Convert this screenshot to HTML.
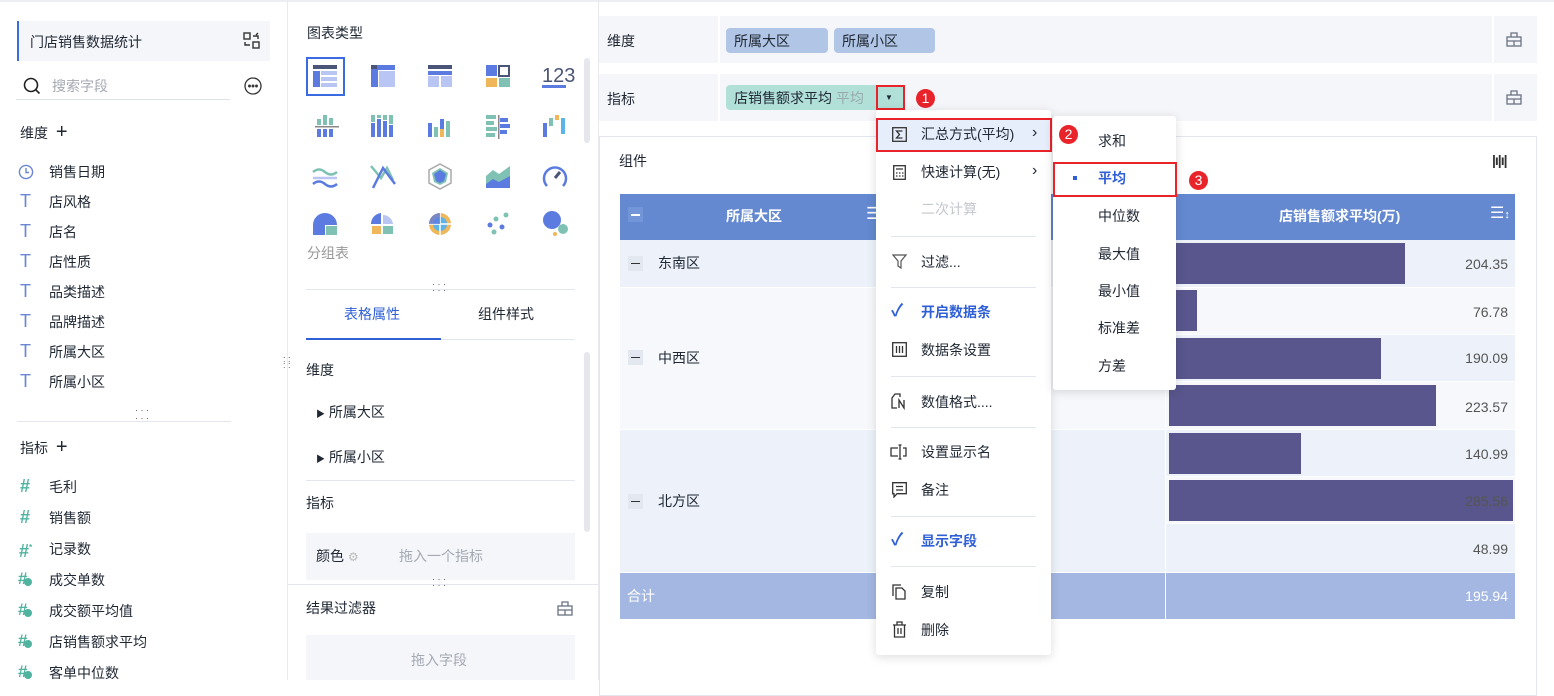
<!DOCTYPE html>
<html><head><meta charset="utf-8"><style>
*{margin:0;padding:0;box-sizing:border-box}
body{width:1554px;height:680px;overflow:hidden;background:#fff;font-family:"Liberation Sans","Noto Sans CJK SC",sans-serif;font-size:14px;color:#1f2733;position:relative}
.a{position:absolute}
.t{position:absolute;white-space:nowrap;line-height:20px}
.ic{position:absolute}
.fi{color:#6c86d6;font-size:18px}
.sep{position:absolute;height:1px;background:#e3e6ee}
</style></head><body>
<div class="a" style="left:0;top:0;width:1554px;height:2px;background:#eceef3"></div>
<!-- LEFT -->
<div class="a" style="left:287px;top:0;width:1px;height:680px;background:#e8eaf0"></div>
<div class="a" style="left:17px;top:21px;width:253px;height:40px;background:#f5f6fa;border-left:2px solid #3b6be0"></div>
<div class="t" style="left:30px;top:32px">门店销售数据统计</div>
<svg class="ic" style="left:243px;top:32px" width="17" height="17" viewBox="0 0 17 17" fill="none" stroke="#333" stroke-width="1.4"><rect x="1" y="1" width="6" height="6"/><rect x="10" y="10" width="6" height="6"/><path d="M10 4h5v3M13 3l2-2M7 13H2v-3"/></svg>
<svg class="ic" style="left:23px;top:77px" width="18" height="18" viewBox="0 0 18 18" fill="none" stroke="#222" stroke-width="1.6"><circle cx="8" cy="8" r="6.5"/><path d="M12.5 12.5l4 4"/></svg>
<div class="t" style="left:52px;top:76px;color:#a4a9b3">搜索字段</div>
<div class="a" style="left:16px;top:99px;width:214px;height:1px;background:#dfe2e8"></div>
<svg class="ic" style="left:244px;top:77px" width="18" height="18" viewBox="0 0 18 18" fill="none" stroke="#333" stroke-width="1.3"><circle cx="9" cy="9" r="8"/><circle cx="5.5" cy="9" r=".8" fill="#333"/><circle cx="9" cy="9" r=".8" fill="#333"/><circle cx="12.5" cy="9" r=".8" fill="#333"/></svg>
<div class="t" style="left:20px;top:122px">维度 <span style="font-size:20px;margin-left:4px">+</span></div>
<svg class="ic" style="left:18px;top:164px" width="16" height="16" viewBox="0 0 16 16" fill="none" stroke="#6c86d6" stroke-width="1.4"><circle cx="8" cy="8" r="6.6"/><path d="M8 4v4.5h3"/></svg>
<div class="t" style="left:49px;top:162px">销售日期</div>
<div class="t fi" style="left:20px;top:191px">T</div><div class="t" style="left:49px;top:192px">店风格</div>
<div class="t fi" style="left:20px;top:221px">T</div><div class="t" style="left:49px;top:222px">店名</div>
<div class="t fi" style="left:20px;top:251px">T</div><div class="t" style="left:49px;top:252px">店性质</div>
<div class="t fi" style="left:20px;top:281px">T</div><div class="t" style="left:49px;top:282px">品类描述</div>
<div class="t fi" style="left:20px;top:311px">T</div><div class="t" style="left:49px;top:312px">品牌描述</div>
<div class="t fi" style="left:20px;top:341px">T</div><div class="t" style="left:49px;top:342px">所属大区</div>
<div class="t fi" style="left:20px;top:371px">T</div><div class="t" style="left:49px;top:372px">所属小区</div>
<div class="a" style="left:17px;top:421px;width:214px;height:1px;background:#e3e6ee"></div>
<div class="t" style="left:135px;top:406px;font-size:9px;line-height:8px;color:#555">· · ·<br>· · ·</div>
<div class="t" style="left:20px;top:437px">指标 <span style="font-size:20px;margin-left:4px">+</span></div>
<div class="t" style="left:20px;top:476px;color:#4fb3a0;font-size:18px;font-weight:bold">#</div><div class="t" style="left:49px;top:477px">毛利</div>
<div class="t" style="left:20px;top:507px;color:#4fb3a0;font-size:18px;font-weight:bold">#</div><div class="t" style="left:49px;top:508px">销售额</div>
<div class="t" style="left:19px;top:538px;color:#4fb3a0;font-size:18px;font-weight:bold">#<sup style="font-size:8px">*</sup></div><div class="t" style="left:49px;top:539px">记录数</div>
<div class="t" style="left:18px;top:569px;color:#4fb3a0;font-size:17px;font-weight:bold">#<span style="display:inline-block;width:8px;height:8px;border-radius:50%;background:#4fb3a0;vertical-align:-2px;margin-left:-3px"></span></div><div class="t" style="left:49px;top:570px">成交单数</div>
<div class="t" style="left:18px;top:600px;color:#4fb3a0;font-size:17px;font-weight:bold">#<span style="display:inline-block;width:8px;height:8px;border-radius:50%;background:#4fb3a0;vertical-align:-2px;margin-left:-3px"></span></div><div class="t" style="left:49px;top:601px">成交额平均值</div>
<div class="t" style="left:18px;top:631px;color:#4fb3a0;font-size:17px;font-weight:bold">#<span style="display:inline-block;width:8px;height:8px;border-radius:50%;background:#4fb3a0;vertical-align:-2px;margin-left:-3px"></span></div><div class="t" style="left:49px;top:632px">店销售额求平均</div>
<div class="t" style="left:18px;top:662px;color:#4fb3a0;font-size:17px;font-weight:bold">#<span style="display:inline-block;width:8px;height:8px;border-radius:50%;background:#4fb3a0;vertical-align:-2px;margin-left:-3px"></span></div><div class="t" style="left:49px;top:663px">客单中位数</div>
<div class="t" style="left:283px;top:356px;font-size:9px;line-height:6px;color:#555">: :<br>: :</div>

<!-- MIDDLE -->
<div class="a" style="left:598px;top:0;width:1px;height:680px;background:#e8eaf0"></div>
<div class="t" style="left:307px;top:23px">图表类型</div>
<div class="a" style="left:306px;top:57px;width:39px;height:39px;border:2px solid #3b6be0"></div>
<svg class="ic" style="left:300px;top:60px" width="280" height="190" viewBox="0 0 280 190">
<g transform="translate(13,5)"><rect width="24" height="4" fill="#4a5577"/><rect y="6" width="7" height="16" fill="#5b7be0"/><rect x="8" y="6" width="16" height="4" fill="#b9c6f3"/><rect x="8" y="12" width="16" height="4" fill="#b9c6f3"/><rect x="8" y="18" width="16" height="4" fill="#b9c6f3"/></g>
<g transform="translate(71,5)"><rect width="7" height="22" fill="#5b7be0"/><rect x="7" width="17" height="5" fill="#5b7be0"/><rect x="8" y="6" width="16" height="16" fill="#b9c6f3"/><rect width="6" height="4" fill="#4a5577"/></g>
<g transform="translate(128,5)"><rect width="24" height="4" fill="#4a5577"/><rect y="6" width="24" height="4" fill="#5b7be0"/><rect y="11" width="11" height="11" fill="#b9c6f3"/><rect x="13" y="11" width="11" height="11" fill="#b9c6f3"/></g>
<g transform="translate(186,5)"><rect width="11" height="11" fill="#5b7be0"/><rect x="13" y="1" width="10" height="10" fill="none" stroke="#4a5577" stroke-width="2"/><rect y="13" width="11" height="9" fill="#f0b75a"/><rect x="13" y="13" width="11" height="9" fill="#7fc2b4"/></g>
<text x="242" y="22" font-family="Liberation Sans" font-size="20" fill="#4a5577">123</text><rect x="242" y="25" width="24" height="3" fill="#5b7be0"/>
<g transform="translate(15,55)"><rect x="8" y="0" width="4" height="10" fill="#7fc2b4"/><rect x="2" y="4" width="4" height="6" fill="#7fc2b4"/><rect x="14" y="3" width="4" height="7" fill="#7fc2b4"/><rect x="0" y="11" width="24" height="1.5" fill="#888"/><rect x="2" y="14" width="4" height="8" fill="#5b7be0"/><rect x="8" y="14" width="4" height="8" fill="#5b7be0"/><rect x="14" y="14" width="4" height="8" fill="#5b7be0"/></g>
<g transform="translate(71,55)"><rect x="0" y="8" width="4" height="14" fill="#5b7be0"/><rect x="0" y="0" width="4" height="7" fill="#7fc2b4"/><rect x="6" y="4" width="4" height="18" fill="#5b7be0"/><rect x="6" y="0" width="4" height="3" fill="#7fc2b4"/><rect x="12" y="6" width="4" height="16" fill="#5b7be0"/><rect x="12" y="0" width="4" height="5" fill="#7fc2b4"/><rect x="18" y="10" width="4" height="12" fill="#5b7be0"/><rect x="18" y="0" width="4" height="9" fill="#7fc2b4"/></g>
<g transform="translate(128,55)"><rect x="0" y="8" width="4" height="14" fill="#5b7be0"/><rect x="6" y="12" width="4" height="10" fill="#7fc2b4"/><rect x="12" y="4" width="4" height="18" fill="#5b7be0"/><rect x="12" y="14" width="4" height="8" fill="#f0b75a"/><rect x="18" y="6" width="4" height="16" fill="#7fc2b4"/></g>
<g transform="translate(186,55)"><rect x="0" y="0" width="10" height="4" fill="#7fc2b4"/><rect x="0" y="6" width="8" height="4" fill="#7fc2b4"/><rect x="0" y="12" width="11" height="4" fill="#7fc2b4"/><rect x="0" y="18" width="9" height="4" fill="#7fc2b4"/><rect x="12" y="0" width="1.5" height="24" fill="#888"/><rect x="14" y="3" width="8" height="4" fill="#5b7be0"/><rect x="14" y="9" width="10" height="4" fill="#5b7be0"/><rect x="14" y="15" width="7" height="4" fill="#5b7be0"/></g>
<g transform="translate(243,55)"><rect x="0" y="8" width="4" height="14" fill="#5b7be0"/><rect x="6" y="3" width="4" height="8" fill="#7fc2b4"/><rect x="12" y="0" width="4" height="5" fill="#f0b75a"/><rect x="18" y="3" width="4" height="16" fill="#5bb3e8"/></g>
<g transform="translate(13,106)" fill="none" stroke-width="2.5"><path d="M0 6q6-5 12 0t12 0" stroke="#7fc2b4"/><path d="M0 12h24" stroke="#b9c6f3"/><path d="M0 18q6-5 12 0t12 0" stroke="#5b7be0"/></g>
<g transform="translate(71,104)" fill="none" stroke-width="2.5"><path d="M0 2l10 12 6-10 6 12" stroke="#7fc2b4"/><path d="M2 24 12 4l12 16" stroke="#5b7be0"/></g>
<g transform="translate(129,104)"><path d="M11 0l11 6v13l-11 6-11-6V6z" fill="none" stroke="#aaa" stroke-width="1.5"/><path d="M11 4l8 5-2 9-6 3-6-3-2-9z" fill="#7fc2b4"/><path d="M11 6l6 4-2 7-4 2-4-2-2-7z" fill="#5b7be0"/></g>
<g transform="translate(186,106)"><path d="M0 10l7-6 6 4 11-8v22H0z" fill="#7fc2b4"/><path d="M0 18l7-5 6 3 11-6v12H0z" fill="#5b7be0"/></g>
<g transform="translate(243,104)" fill="none"><path d="M4 22A11 11 0 1 1 20 22" stroke="#5b7be0" stroke-width="2.5"/><path d="M12 14l5-6" stroke="#4a5577" stroke-width="3"/></g>
<g transform="translate(13,153)"><path d="M12 0A12 12 0 0 0 0 12v10h12V12h12A12 12 0 0 0 12 0z" fill="#5b7be0"/><rect x="13" y="13" width="11" height="9" fill="#7fc2b4"/></g>
<g transform="translate(71,153)"><path d="M10 0A11 11 0 0 0 0 11h10z" fill="#5b7be0"/><path d="M12 2a10 10 0 0 1 10 9H12z" fill="#b9c6f3"/><rect x="1" y="13" width="9" height="8" fill="#f0b75a"/><rect x="12" y="13" width="10" height="8" fill="#7fc2b4"/></g>
<g transform="translate(129,153)"><circle cx="11" cy="11" r="11" fill="#f0b75a"/><circle cx="11" cy="11" r="7" fill="#5bb3e8"/><path d="M11 0v22M0 11h22" stroke="#fff" stroke-width="1.5"/><path d="M0 11a11 11 0 0 1 11-11v11z" fill="#5b7be0" opacity=".8"/></g>
<g transform="translate(186,153)" fill="#7fc2b4"><circle cx="20" cy="2" r="2.5"/><circle cx="10" cy="6" r="2.5"/><circle cx="4" cy="12" r="2.5" fill="#5b7be0"/><circle cx="16" cy="14" r="2.5" fill="#5b7be0"/><circle cx="8" cy="19" r="2.5"/></g>
<g transform="translate(243,151)"><circle cx="9" cy="9" r="9" fill="#5b7be0"/><circle cx="20" cy="18" r="5" fill="#7fc2b4"/><circle cx="12" cy="23" r="2" fill="#f0b75a"/></g>
</svg>
<div class="a" style="left:584px;top:58px;width:6px;height:85px;border-radius:3px;background:#e5e7ec"></div>
<div class="t" style="left:307px;top:243px;color:#999">分组表</div>
<div class="t" style="left:432px;top:281px;font-size:9px;line-height:6px;color:#555">· · ·<br>· · ·</div>
<div class="a" style="left:306px;top:289px;width:269px;height:1px;background:#e3e6ee"></div>
<div class="t" style="left:344px;top:304px;color:#2f5fd6">表格属性</div>
<div class="t" style="left:478px;top:304px">组件样式</div>
<div class="a" style="left:306px;top:339px;width:269px;height:1px;background:#e3e6ee"></div>
<div class="a" style="left:306px;top:338px;width:135px;height:2px;background:#2f5fd6"></div>
<div class="a" style="left:584px;top:352px;width:6px;height:180px;border-radius:3px;background:#e5e7ec"></div>
<div class="t" style="left:306px;top:360px">维度</div>
<div class="t" style="left:316px;top:402px"><span style="font-size:9px">▶</span> 所属大区</div>
<div class="t" style="left:316px;top:447px"><span style="font-size:9px">▶</span> 所属小区</div>
<div class="a" style="left:306px;top:480px;width:269px;height:1px;background:#e3e6ee"></div>
<div class="t" style="left:306px;top:493px">指标</div>
<div class="a" style="left:306px;top:533px;width:269px;height:47px;background:#f5f6fa"></div>
<div class="t" style="left:316px;top:546px">颜色 <span style="color:#bbb;font-size:12px">⚙</span></div>
<div class="t" style="left:399px;top:546px;color:#a4a9b3">拖入一个指标</div>
<div class="a" style="left:288px;top:584px;width:310px;height:1px;background:#e3e6ee"></div>
<div class="t" style="left:432px;top:576px;font-size:9px;line-height:6px;color:#555">· · ·<br>· · ·</div>
<div class="t" style="left:306px;top:598px">结果过滤器</div>
<svg class="ic" style="left:557px;top:601px" width="16" height="15" viewBox="0 0 16 15" fill="none" stroke="#6a7282" stroke-width="1.3"><rect x="1" y="5" width="14" height="9"/><path d="M5 5V1h6v4M1 9h14M8 9v5"/></svg>
<div class="a" style="left:306px;top:635px;width:269px;height:45px;background:#f5f6fa"></div>
<div class="t" style="left:411px;top:650px;color:#a4a9b3">拖入字段</div>

<!-- RIGHT -->
<div class="a" style="left:599px;top:16px;width:938px;height:47px;background:#f5f6fa"></div>
<div class="a" style="left:718px;top:16px;width:2px;height:47px;background:#fff"></div>
<div class="a" style="left:1492px;top:16px;width:2px;height:47px;background:#fff"></div>
<div class="t" style="left:607px;top:31px">维度</div>
<div class="a" style="left:726px;top:28px;width:102px;height:25px;background:#b1c5e6;border-radius:4px"></div>
<div class="t" style="left:734px;top:31px">所属大区</div>
<div class="a" style="left:834px;top:28px;width:101px;height:25px;background:#b1c5e6;border-radius:4px"></div>
<div class="t" style="left:842px;top:31px">所属小区</div>
<svg class="ic" style="left:1506px;top:32px" width="16" height="15" viewBox="0 0 16 15" fill="none" stroke="#6a7282" stroke-width="1.3"><rect x="1" y="5" width="14" height="9"/><path d="M5 5V1h6v4M1 9h14M8 9v5"/></svg>
<div class="a" style="left:599px;top:74px;width:938px;height:47px;background:#f5f6fa"></div>
<div class="a" style="left:718px;top:74px;width:2px;height:47px;background:#fff"></div>
<div class="a" style="left:1492px;top:74px;width:2px;height:47px;background:#fff"></div>
<div class="t" style="left:607px;top:89px">指标</div>
<div class="a" style="left:726px;top:85px;width:178px;height:25px;background:#b0e0d8;border-radius:4px"></div>
<div class="t" style="left:734px;top:88px">店销售额求平均 <span style="color:#9aa">平均</span></div>
<div class="a" style="left:876px;top:85px;width:29px;height:25px;border:2px solid #e8232a;background:#b0e0d8"></div>
<div class="t" style="left:885px;top:88px;font-size:8px">▼</div>
<div class="a" style="left:916px;top:89px;width:19px;height:19px;border-radius:50%;background:#e8232a;color:#fff;font-size:14px;line-height:19px;text-align:center">1</div>
<svg class="ic" style="left:1506px;top:90px" width="16" height="15" viewBox="0 0 16 15" fill="none" stroke="#6a7282" stroke-width="1.3"><rect x="1" y="5" width="14" height="9"/><path d="M5 5V1h6v4M1 9h14M8 9v5"/></svg>

<div class="a" style="left:599px;top:136px;width:938px;height:560px;border:1px solid #e3e6ef"></div>
<div class="t" style="left:619px;top:151px">组件</div>
<div class="t" style="left:1492px;top:150px;font-size:14px;letter-spacing:-1px;font-weight:bold;color:#333">|ı|ı|</div>
<!-- table -->
<div class="a" style="left:620px;top:194px;width:895px;height:46px;background:#6489d0"></div>
<div class="a" style="left:628px;top:207px;width:15px;height:15px;background:#7296d8"></div>
<div class="a" style="left:631px;top:214px;width:9px;height:1.5px;background:#fff"></div>
<div class="t" style="left:726px;top:206px;color:#fff;font-weight:bold">所属大区</div>
<div class="t" style="left:866px;top:204px;color:#fff;font-size:17px">☰</div>
<div class="t" style="left:1279px;top:206px;color:#fff;font-weight:bold">店销售额求平均(万)</div>
<div class="t" style="left:1490px;top:204px;color:#fff;font-size:16px">☰<span style="font-size:11px">↕</span></div>
<div class="a" style="left:1165px;top:240px;width:1px;height:380px;background:#fff"></div>
<!-- col1 -->
<div class="a" style="left:620px;top:240px;width:545px;height:47px;background:#edf2fa"></div>
<div class="a" style="left:620px;top:288px;width:545px;height:141px;background:#f6f8fc"></div>
<div class="a" style="left:620px;top:430px;width:545px;height:142px;background:#edf2fa"></div>
<div class="a" style="left:628px;top:256px;width:15px;height:15px;background:#e3e8f0"></div><div class="a" style="left:631px;top:263px;width:9px;height:1px;background:#333"></div>
<div class="t" style="left:658px;top:253px">东南区</div>
<div class="a" style="left:628px;top:350px;width:15px;height:15px;background:#e3e8f0"></div><div class="a" style="left:631px;top:357px;width:9px;height:1px;background:#333"></div>
<div class="t" style="left:658px;top:348px">中西区</div>
<div class="a" style="left:628px;top:494px;width:15px;height:15px;background:#e3e8f0"></div><div class="a" style="left:631px;top:501px;width:9px;height:1px;background:#333"></div>
<div class="t" style="left:658px;top:491px">北方区</div>
<!-- col3 rows -->
<div class="a" style="left:1166px;top:240px;width:349px;height:47px;background:#edf2fa"></div>
<div class="a" style="left:1166px;top:288px;width:349px;height:46px;background:#f6f8fc"></div>
<div class="a" style="left:1166px;top:335px;width:349px;height:46px;background:#edf2fa"></div>
<div class="a" style="left:1166px;top:382px;width:349px;height:47px;background:#f6f8fc"></div>
<div class="a" style="left:1166px;top:430px;width:349px;height:46px;background:#edf2fa"></div>
<div class="a" style="left:1166px;top:477px;width:349px;height:46px;background:#f6f8fc"></div>
<div class="a" style="left:1166px;top:524px;width:349px;height:48px;background:#edf2fa"></div>
<div class="a" style="left:1169px;top:243px;width:236px;height:41px;background:#58568c"></div>
<div class="a" style="left:1169px;top:290px;width:28px;height:41px;background:#58568c"></div>
<div class="a" style="left:1169px;top:338px;width:212px;height:41px;background:#58568c"></div>
<div class="a" style="left:1169px;top:385px;width:267px;height:41px;background:#58568c"></div>
<div class="a" style="left:1169px;top:433px;width:132px;height:41px;background:#58568c"></div>
<div class="a" style="left:1169px;top:480px;width:344px;height:41px;background:#58568c"></div>
<div class="t" style="left:1400px;top:254px;width:108px;text-align:right;color:#555">204.35</div>
<div class="t" style="left:1400px;top:302px;width:108px;text-align:right;color:#555">76.78</div>
<div class="t" style="left:1400px;top:348px;width:108px;text-align:right;color:#555">190.09</div>
<div class="t" style="left:1400px;top:397px;width:108px;text-align:right;color:#555">223.57</div>
<div class="t" style="left:1400px;top:444px;width:108px;text-align:right;color:#555">140.99</div>
<div class="t" style="left:1400px;top:491px;width:108px;text-align:right;color:#555">285.56</div>
<div class="t" style="left:1400px;top:539px;width:108px;text-align:right;color:#555">48.99</div>
<div class="a" style="left:620px;top:573px;width:895px;height:46px;background:#a3b7e2"></div>
<div class="a" style="left:1165px;top:573px;width:1px;height:46px;background:#fff"></div>
<div class="t" style="left:627px;top:586px;color:#fff">合计</div>
<div class="t" style="left:1400px;top:586px;width:108px;text-align:right;color:#fff">195.94</div>

<!-- MENU -->
<div class="a" style="left:876px;top:110px;width:175px;height:545px;background:#fff;border-radius:3px;box-shadow:0 2px 10px rgba(0,0,0,.14)"></div>
<div class="a" style="left:876px;top:118px;width:176px;height:34px;background:#e6eefc;border:2px solid #e8232a"></div>
<svg class="ic" style="left:892px;top:127px" width="15" height="15" viewBox="0 0 15 15" fill="none" stroke="#333" stroke-width="1.3"><rect x=".7" y=".7" width="13.6" height="13.6"/><path d="M10.5 4H4.5l3 3.5-3 3.5h6"/></svg>
<div class="t" style="left:921px;top:124px">汇总方式(平均)</div><div class="t" style="left:1032px;top:123px;font-size:16px">›</div>
<svg class="ic" style="left:892px;top:165px" width="15" height="15" viewBox="0 0 15 15" fill="none" stroke="#333" stroke-width="1.3"><rect x="1.7" y=".7" width="11.6" height="13.6"/><path d="M4 4h7M4 8h1.5M7 8h1.5M10 8h1.5M4 11h1.5M7 11h1.5M10 11h1.5"/></svg>
<div class="t" style="left:921px;top:162px">快速计算(无)</div><div class="t" style="left:1032px;top:161px;font-size:16px">›</div>
<div class="t" style="left:921px;top:199px;color:#c4c7ce">二次计算</div>
<div class="sep" style="left:891px;top:236px;width:145px"></div>
<svg class="ic" style="left:892px;top:254px" width="15" height="15" viewBox="0 0 15 15" fill="none" stroke="#555" stroke-width="1.2"><path d="M1 1h13L9 7v7l-3-2V7z"/></svg>
<div class="t" style="left:921px;top:252px">过滤...</div>
<div class="sep" style="left:891px;top:287px;width:145px"></div>
<div class="t" style="left:891px;top:301px;color:#2f5fd6;font-size:17px;font-weight:bold">✓</div>
<div class="t" style="left:921px;top:302px;color:#2f5fd6;font-weight:bold">开启数据条</div>
<svg class="ic" style="left:892px;top:342px" width="15" height="15" viewBox="0 0 15 15" fill="none" stroke="#333" stroke-width="1.3"><rect x=".7" y=".7" width="13.6" height="13.6"/><path d="M4.5 4v7M7.5 4v7M10.5 4v7"/></svg>
<div class="t" style="left:921px;top:340px">数据条设置</div>
<div class="sep" style="left:891px;top:376px;width:145px"></div>
<svg class="ic" style="left:891px;top:393px" width="17" height="17" viewBox="0 0 17 17" fill="none" stroke="#333" stroke-width="1.3"><path d="M6 15H1V5l3-4h5v3M8 15V7l5 8V7"/></svg>
<div class="t" style="left:921px;top:392px">数值格式....</div>
<div class="sep" style="left:891px;top:427px;width:145px"></div>
<svg class="ic" style="left:890px;top:444px" width="18" height="16" viewBox="0 0 18 16" fill="none" stroke="#333" stroke-width="1.3"><path d="M8 4H1v8h7M13 4h3v8h-3M10 1v14M8.5 1h3M8.5 15h3"/></svg>
<div class="t" style="left:921px;top:442px">设置显示名</div>
<svg class="ic" style="left:892px;top:482px" width="15" height="16" viewBox="0 0 15 16" fill="none" stroke="#333" stroke-width="1.3"><path d="M.7.7h13.6v11H5L2 15v-3.3H.7z"/><path d="M4 4.5h7M4 8h7"/></svg>
<div class="t" style="left:921px;top:480px">备注</div>
<div class="sep" style="left:891px;top:516px;width:145px"></div>
<div class="t" style="left:891px;top:530px;color:#2f5fd6;font-size:17px;font-weight:bold">✓</div>
<div class="t" style="left:921px;top:531px;color:#2f5fd6;font-weight:bold">显示字段</div>
<div class="sep" style="left:891px;top:566px;width:145px"></div>
<svg class="ic" style="left:892px;top:584px" width="15" height="16" viewBox="0 0 15 16" fill="none" stroke="#333" stroke-width="1.3"><path d="M1 12V1h8"/><path d="M4 4h6l3 3v8H4z"/></svg>
<div class="t" style="left:921px;top:582px">复制</div>
<svg class="ic" style="left:892px;top:621px" width="15" height="17" viewBox="0 0 15 17" fill="none" stroke="#333" stroke-width="1.3"><path d="M1 4h13M5 4V1h5v3M2.5 4v12h10V4M6 7v6M9 7v6"/></svg>
<div class="t" style="left:921px;top:620px">删除</div>

<!-- SUBMENU -->
<div class="a" style="left:1053px;top:116px;width:123px;height:274px;background:#fff;border-radius:3px;box-shadow:0 2px 10px rgba(0,0,0,.14)"></div>
<div class="t" style="left:1098px;top:131px">求和</div>
<div class="a" style="left:1053px;top:162px;width:124px;height:35px;border:2px solid #e8232a"></div>
<div class="a" style="left:1073px;top:176px;width:4px;height:4px;background:#2f5fd6"></div>
<div class="t" style="left:1098px;top:168px;color:#2f5fd6;font-weight:bold">平均</div>
<div class="t" style="left:1098px;top:206px">中位数</div>
<div class="t" style="left:1098px;top:244px">最大值</div>
<div class="t" style="left:1098px;top:281px">最小值</div>
<div class="t" style="left:1098px;top:318px">标准差</div>
<div class="t" style="left:1098px;top:356px">方差</div>
<div class="a" style="left:1059px;top:125px;width:19px;height:19px;border-radius:50%;background:#e8232a;color:#fff;font-size:14px;line-height:19px;text-align:center">2</div>
<div class="a" style="left:1189px;top:171px;width:19px;height:19px;border-radius:50%;background:#e8232a;color:#fff;font-size:14px;line-height:19px;text-align:center">3</div>
</body></html>
